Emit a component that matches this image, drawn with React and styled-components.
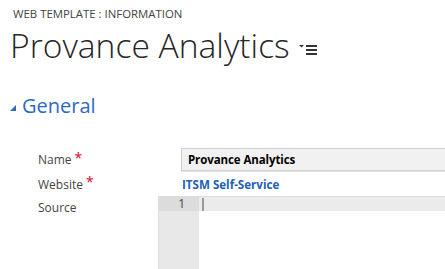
import React from 'react';
import styled, { createGlobalStyle } from 'styled-components';

const GlobalStyle = createGlobalStyle`
    body {
        margin:0;
        background:#fff;
        font-family:"Open Sans", "Noto Sans", sans-serif;
        overflow:hidden;
    }
`

const Page = styled.div`
    width:445px;
    height:269px;
    overflow:hidden;
    position:relative;
`

const Header = styled.header`
    padding:7px 0 0 10px;
`

const EntityType = styled.div`
    font-size:11.4px;
    line-height:14px;
    color:#444;
    padding-left:3px;
`

const TitleRow = styled.div`
    display:flex;
    align-items:center;
    gap:9px;
    margin-top:4px;
`

const Title = styled.h1`
    margin:0;
    font-weight:300;
    font-size:33.6px;
    line-height:40px;
    color:#262626;
    white-space:nowrap;
`

const MenuIcon = styled.svg`
    width:18px;
    height:12px;
    margin-top:10px;
    flex:none;
`

const Section = styled.section`
    margin-top:28px;
`

const SectionTitle = styled.h2`
    display:flex;
    align-items:center;
    gap:6px;
    margin:0 0 0 10px;
    font-weight:400;
    font-size:20px;
    line-height:26px;
    color:#2d69c3;
`

const Triangle = styled.span`
    width:0;
    height:0;
    border-left:6px solid transparent;
    border-bottom:6px solid #2d69c3;
    margin-top:4px;
`

const Form = styled.div`
    display:grid;
    grid-template-columns:120px 1fr;
    margin-top:28px;
    padding-left:38px;
`

const Label = styled.div`
    font-size:12px;
    color:#444;
    height:${({h}) => h}px;
    display:flex;
    align-items:${({top}) => top ? 'flex-start' : 'center'};
    padding-top:${({top}) => top ? '3px' : '0'};
    box-sizing:border-box;
`

const Required = styled.span`
    color:#e0001b;
    font-size:14px;
    margin-left:3px;
    align-self:flex-start;
    line-height:${({h}) => h - 4}px;
`

const ValueCell = styled.div`
    height:${({h}) => h}px;
    display:flex;
    align-items:center;
    padding-left:${({inset}) => inset}px;
    box-sizing:border-box;
`

const TextBox = styled.div`
    flex:1;
    height:23px;
    margin-right:-10px;
    background:#f2f1f1;
    border:1px solid #cfcfcf;
    box-shadow:0 1px 0 #e4e4e4;
    box-sizing:border-box;
    padding-left:6px;
    display:flex;
    align-items:center;
    font-size:11.5px;
    letter-spacing:-0.1px;
    font-weight:700;
    color:#000;
`

const LookupLink = styled.a`
    font-size:11.6px;
    font-weight:700;
    color:#2160b8;
    text-decoration:none;
`

const Editor = styled.div`
    display:flex;
    height:100px;
`

const Gutter = styled.div`
    width:41px;
    background:#e8e8e8;
    border-left:1px solid #dedede;
    box-sizing:border-box;
    flex:none;
`

const LineNumber = styled.div`
    height:15px;
    background:${({active}) => active ? '#dcdcdc' : 'transparent'};
    font-size:12px;
    line-height:15px;
    color:#444;
    text-align:right;
    padding-right:14px;
`

const Lines = styled.div`
    flex:1;
`

const ActiveLine = styled.div`
    height:15px;
    background:#ebebeb;
    border-top:1px solid #dcdcdc;
    box-sizing:border-box;
    position:relative;
`

const Cursor = styled.span`
    position:absolute;
    left:3px;
    top:1px;
    width:2px;
    height:13px;
    background:#9a9a9a;
`

export default function App() {
    return (
        <Page>
            <GlobalStyle />
            <Header>
                <EntityType>WEB TEMPLATE : INFORMATION</EntityType>
                <TitleRow>
                    <Title>Provance Analytics</Title>
                    <MenuIcon viewBox="0 0 18 12">
                        <polygon points="0,1 5,1 2.5,3.5" fill="#333" />
                        <rect x="7" y="1" width="11" height="2" fill="#333" />
                        <rect x="7" y="5" width="11" height="2" fill="#333" />
                        <rect x="7" y="9" width="11" height="2" fill="#333" />
                    </MenuIcon>
                </TitleRow>
            </Header>
            <Section>
                <SectionTitle><Triangle />General</SectionTitle>
                <Form>
                    <Label h={25}>Name<Required h={25}>*</Required></Label>
                    <ValueCell h={25} inset={23}>
                        <TextBox>Provance Analytics</TextBox>
                    </ValueCell>
                    <Label h={24}>Website<Required h={24}>*</Required></Label>
                    <ValueCell h={24} inset={24}>
                        <LookupLink href="#">ITSM Self-Service</LookupLink>
                    </ValueCell>
                    <Label h={80} top>Source</Label>
                    <Editor>
                        <Gutter>
                            <LineNumber active>1</LineNumber>
                        </Gutter>
                        <Lines>
                            <ActiveLine><Cursor /></ActiveLine>
                        </Lines>
                    </Editor>
                </Form>
            </Section>
        </Page>
    )
}
